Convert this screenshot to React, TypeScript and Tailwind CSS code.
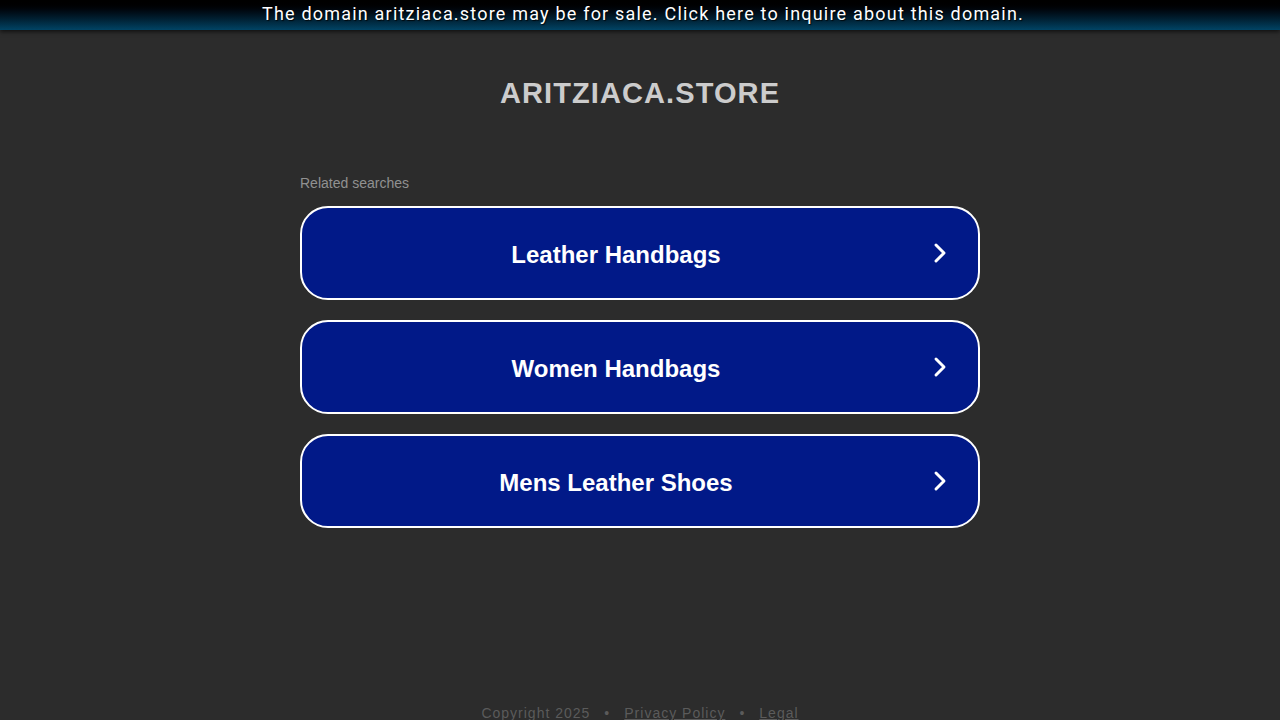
import { ChevronRight } from 'lucide-react';

const searches = ['Leather Handbags', 'Women Handbags', 'Mens Leather Shoes'];

export default function App() {
  return (
    <div className="min-h-[720px] h-[720px] overflow-hidden bg-[#2c2c2c] flex flex-col font-['Liberation_Sans',Arial,sans-serif]">
      {/* sale banner */}
      <div className="h-[30px] shrink-0 bg-gradient-to-b from-[#000000] to-[#014465] shadow-[0_2px_4px_rgba(0,0,0,0.6)] flex items-center justify-center">
        <span className="text-[18px] tracking-[1.2px] text-white leading-[28px] -translate-y-[1px] translate-x-[3px] [text-shadow:1px_1px_1px_rgba(0,0,0,0.8)] font-['Roboto',Arial,sans-serif]">
          The domain aritziaca.store may be for sale. Click here to inquire about this domain.
        </span>
      </div>

      <h1 className="mt-[45px] text-center text-[29px] font-bold tracking-[1.1px] text-[#cccccc] leading-[36px]">
        ARITZIACA.STORE
      </h1>

      <div className="w-[680px] mx-auto mt-[64px]">
        <p className="text-[14px] text-[#919191] leading-[16px] mb-[15px]">Related searches</p>
        <div className="flex flex-col gap-[20px]">
          {searches.map((s) => (
            <div
              key={s}
              className="h-[94px] rounded-[28px] border-2 border-white bg-[#011988] flex items-center pl-[22px] pr-[22px]"
            >
              <span className="flex-1 text-center text-[24px] font-bold text-white pt-[3px]">{s}</span>
              <ChevronRight className="w-[32px] h-[32px] text-white ml-[16px]" strokeWidth={2.2} />
            </div>
          ))}
        </div>
      </div>

      <div className="mt-auto flex justify-center items-center gap-[14px] text-[14px] tracking-[1px] text-[#5b5b5b] leading-[16px] translate-y-[1px]">
        <span>Copyright 2025</span>
        <span>•</span>
        <span className="underline">Privacy Policy</span>
        <span>•</span>
        <span className="underline">Legal</span>
      </div>
    </div>
  );
}
